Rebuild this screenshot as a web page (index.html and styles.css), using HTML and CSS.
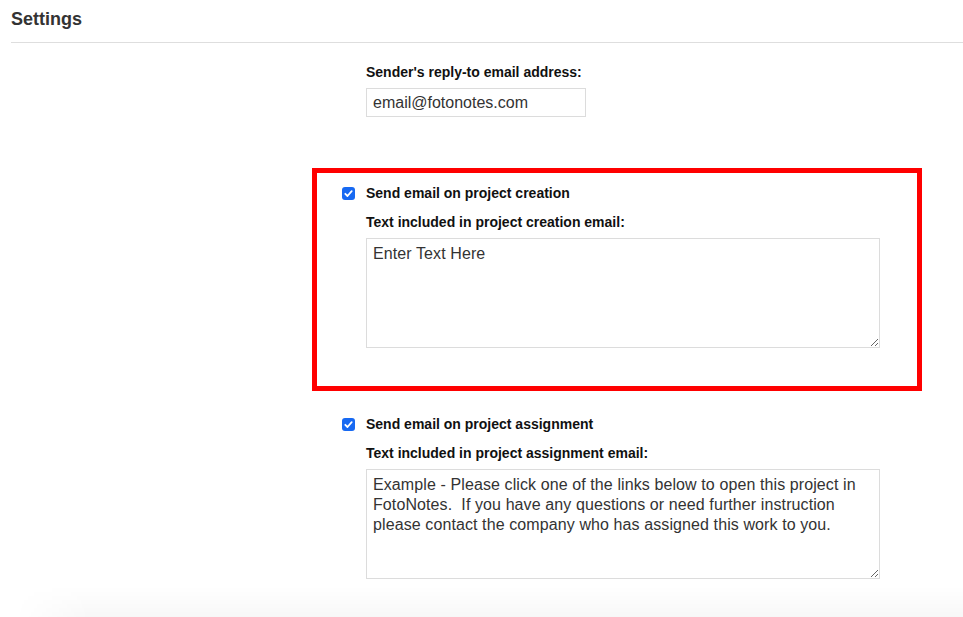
FILE: index.html
```html
<!DOCTYPE html>
<html>
<head>
<meta charset="utf-8">
<link rel="stylesheet" href="styles.css">
</head>
<body>
<header class="page-header">
  <h1 class="page-title">Settings</h1>
</header>
<main class="settings">
  <div class="field">
    <label class="field-label" for="reply">Sender's reply-to email address:</label>
    <input id="reply" class="text-input" type="text" value="email@fotonotes.com">
  </div>

  <section class="option-block highlighted">
    <label class="check-row">
      <span class="checkbox"><svg viewBox="0 0 13 13" width="13" height="13"><path d="M3.3 6.8 L5.5 9 L9.7 4.2" fill="none" stroke="#fff" stroke-width="1.8" stroke-linecap="round" stroke-linejoin="round"/></svg></span>
      <span class="check-label">Send email on project creation</span>
    </label>
    <div class="sub-field">
      <label class="field-label">Text included in project creation email:</label>
      <textarea class="text-area">Enter Text Here</textarea>
    </div>
  </section>

  <section class="option-block plain">
    <label class="check-row">
      <span class="checkbox"><svg viewBox="0 0 13 13" width="13" height="13"><path d="M3.3 6.8 L5.5 9 L9.7 4.2" fill="none" stroke="#fff" stroke-width="1.8" stroke-linecap="round" stroke-linejoin="round"/></svg></span>
      <span class="check-label">Send email on project assignment</span>
    </label>
    <div class="sub-field">
      <label class="field-label">Text included in project assignment email:</label>
      <textarea class="text-area">Example - Please click one of the links below to open this project in FotoNotes.  If you have any questions or need further instruction please contact the company who has assigned this work to you.</textarea>
    </div>
  </section>
</main>
<div class="footer-shade"></div>
</body>
</html>
```

FILE: styles.css
```css
* { box-sizing: border-box; }
html, body { margin: 0; padding: 0; background: #fff; }
body {
  font-family: "Liberation Sans", Arial, Helvetica, sans-serif;
  color: #111;
  width: 963px;
  height: 617px;
  overflow: hidden;
}
.page-header {
  margin-left: 11px;
  height: 43px;
  border-bottom: 1px solid #dedede;
  padding-top: 9px;
}
.page-title {
  margin: 0;
  font-size: 18px;
  line-height: 20px;
  font-weight: bold;
  color: #333;
}
.settings {
  margin-left: 312px;
  width: 610px;
  display: flex;
  flex-direction: column;
}
.field {
  padding-left: 54px;
  padding-top: 21px;
  display: flex;
  flex-direction: column;
  align-items: flex-start;
}
.field-label {
  display: block;
  font-size: 14px;
  line-height: 16px;
  font-weight: bold;
  color: #111;
}
.text-input {
  margin-top: 8px;
  width: 220px;
  height: 29px;
  border: 1px solid #dcdcdc;
  padding: 0 6px;
  font-family: "Liberation Sans", Arial, sans-serif;
  font-size: 16px;
  color: #333;
  outline: none;
}
.option-block {
  border: 5px solid transparent;
  padding: 12px 0 38px 25px;
}
.highlighted {
  margin-top: 51px;
  border-color: #ff0000;
}
.plain {
  margin-top: 8px;
  padding-bottom: 0;
}
.check-row {
  display: flex;
  align-items: center;
  gap: 11px;
  height: 16px;
}
.checkbox {
  width: 13px;
  height: 13px;
  border-radius: 3px;
  background: #1769f2;
  display: flex;
}
.check-label {
  font-size: 14px;
  line-height: 16px;
  font-weight: bold;
  color: #111;
}
.sub-field {
  margin-left: 24px;
  margin-top: 13px;
}
.text-area {
  display: block;
  margin-top: 8px;
  width: 514px;
  height: 110px;
  border: 1px solid #dcdcdc;
  padding: 5px 6px 4px;
  font-family: "Liberation Sans", Arial, sans-serif;
  font-size: 16px;
  line-height: 20px;
  letter-spacing: 0.1px;
  color: #333;
  resize: both;
  outline: none;
}
.footer-shade {
  margin-top: 2px;
  height: 37px;
  border-bottom: 1px solid #e4dfe4;
  background: linear-gradient(to bottom, rgba(0,0,0,0) 0%, rgba(0,0,0,0.035) 100%);
  -webkit-mask-image: linear-gradient(to right, transparent 15px, #000 90px);
  mask-image: linear-gradient(to right, transparent 15px, #000 90px);
}
```
